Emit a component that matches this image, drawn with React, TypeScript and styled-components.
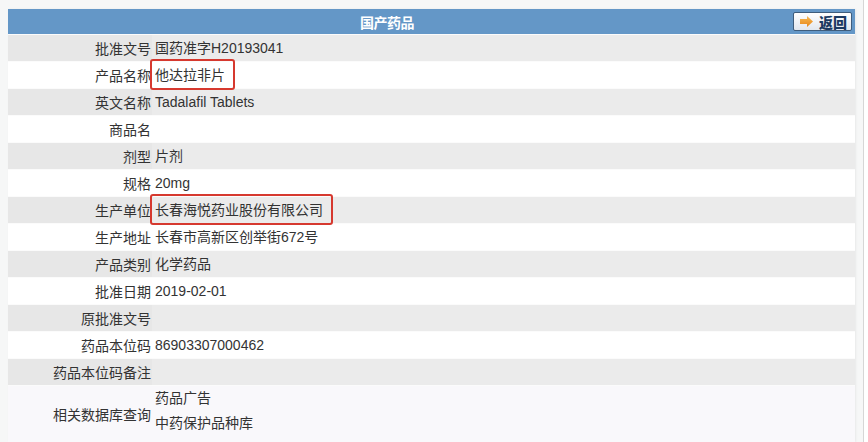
import React from "react";
import styled, { createGlobalStyle } from "styled-components";

const Global = createGlobalStyle`
  html, body { margin: 0; padding: 0; background: #ffffff; }
  body { font-family: "Liberation Sans", "Noto Sans CJK SC", sans-serif; }
`;

const Frame = styled.div`
  width: 855px;
  height: 442px;
  overflow: hidden;
  padding: 9px 0 0 8px;
  background: #f6f7f7;
  border-right: 1px solid #d6d6d6;
  box-sizing: content-box;
`;

const Table = styled.div`
  width: 847px;
  display: flex;
  flex-direction: column;
  gap: 1px;
  background: #fbfbfb;
  box-shadow: 1px 0 2px rgba(0, 0, 0, 0.06);
`;

const Header = styled.div`
  height: 25px;
  display: flex;
  align-items: center;
  background: #6497c7;
`;

const Title = styled.div`
  flex: 1;
  text-align: center;
  color: #ffffff;
  font-family: "Noto Sans CJK SC", sans-serif;
  font-size: 14px;
  font-weight: bold;
  letter-spacing: -0.5px;
`;

const ButtonCell = styled.div`
  width: 89px;
  display: flex;
  justify-content: flex-end;
  padding-right: 3px;
  box-sizing: border-box;
`;

const BackButton = styled.button`
  width: 59px;
  height: 19px;
  display: flex;
  align-items: center;
  gap: 6px;
  padding: 0 0 0 6px;
  border: 1px solid #3f5d7c;
  border-radius: 2px;
  background: linear-gradient(#ffffff, #e2e7ee);
  color: #1b3a62;
  font-family: "Noto Sans CJK SC", sans-serif;
  font-size: 14px;
  font-weight: 900;
  line-height: 1;
  cursor: pointer;
`;

const Row = styled.div<{ $shade: "gray" | "white" | "soft"; $tall?: boolean }>`
  display: flex;
  min-height: ${(p) => (p.$tall ? "56px" : "26px")};
  background: ${(p) =>
    p.$shade === "gray" ? "#ebebeb" : p.$shade === "soft" ? "#f9f8fb" : "#ffffff"};
  color: #333333;
  font-size: 14px;
`;

const Label = styled.div<{ $shade: "gray" | "white" | "soft" }>`
  width: 144px;
  flex-shrink: 0;
  display: flex;
  align-items: center;
  justify-content: flex-end;
  padding-right: 1px;
  box-sizing: border-box;
  background: ${(p) => (p.$shade === "gray" ? "#e7e7e7" : "transparent")};
`;

const Value = styled.div<{ $top?: boolean }>`
  flex: 1;
  display: flex;
  flex-direction: column;
  justify-content: ${(p) => (p.$top ? "flex-start" : "center")};
  padding-left: 3px;
  line-height: 25px;
`;

const Highlight = styled.span`
  position: relative;
  display: inline-block;
  line-height: 20px;
  &::after {
    content: "";
    position: absolute;
    top: -6px;
    bottom: -5px;
    left: -5px;
    right: -10px;
    border: 2px solid #d6392f;
    border-radius: 3px;
  }
`;

const Arrow = () => (
  <svg width="13" height="11" viewBox="0 0 13 11">
    <defs>
      <linearGradient id="ag" x1="0" y1="0" x2="0" y2="1">
        <stop offset="0" stopColor="#f8bb55" />
        <stop offset="1" stopColor="#e6861a" />
      </linearGradient>
    </defs>
    <path d="M0 3 H7 V0 L13 5.5 L7 11 V8 H0 Z" fill="url(#ag)" />
  </svg>
);

type Item = { label: string; value?: React.ReactNode };

const items: Item[] = [
  { label: "批准文号", value: "国药准字H20193041" },
  { label: "产品名称", value: <Highlight>他达拉非片</Highlight> },
  { label: "英文名称", value: "Tadalafil Tablets" },
  { label: "商品名" },
  { label: "剂型", value: "片剂" },
  { label: "规格", value: "20mg" },
  { label: "生产单位", value: <Highlight>长春海悦药业股份有限公司</Highlight> },
  { label: "生产地址", value: "长春市高新区创举街672号" },
  { label: "产品类别", value: "化学药品" },
  { label: "批准日期", value: "2019-02-01" },
  { label: "原批准文号" },
  { label: "药品本位码", value: "86903307000462" },
  { label: "药品本位码备注" },
];

export default function App() {
  return (
    <>
      <Global />
      <Frame>
        <Table>
          <Header>
            <Title>国产药品</Title>
            <ButtonCell>
              <BackButton>
                <Arrow />
                返回
              </BackButton>
            </ButtonCell>
          </Header>
          {items.map((it, i) => {
            const shade = i % 2 === 0 ? "gray" : "white";
            return (
              <Row key={it.label} $shade={shade}>
                <Label $shade={shade}>{it.label}</Label>
                <Value>{it.value ? <div>{it.value}</div> : null}</Value>
              </Row>
            );
          })}
          <Row $shade="soft" $tall>
            <Label $shade="soft">相关数据库查询</Label>
            <Value $top>
              <div>药品广告</div>
              <div>中药保护品种库</div>
            </Value>
          </Row>
        </Table>
      </Frame>
    </>
  );
}
